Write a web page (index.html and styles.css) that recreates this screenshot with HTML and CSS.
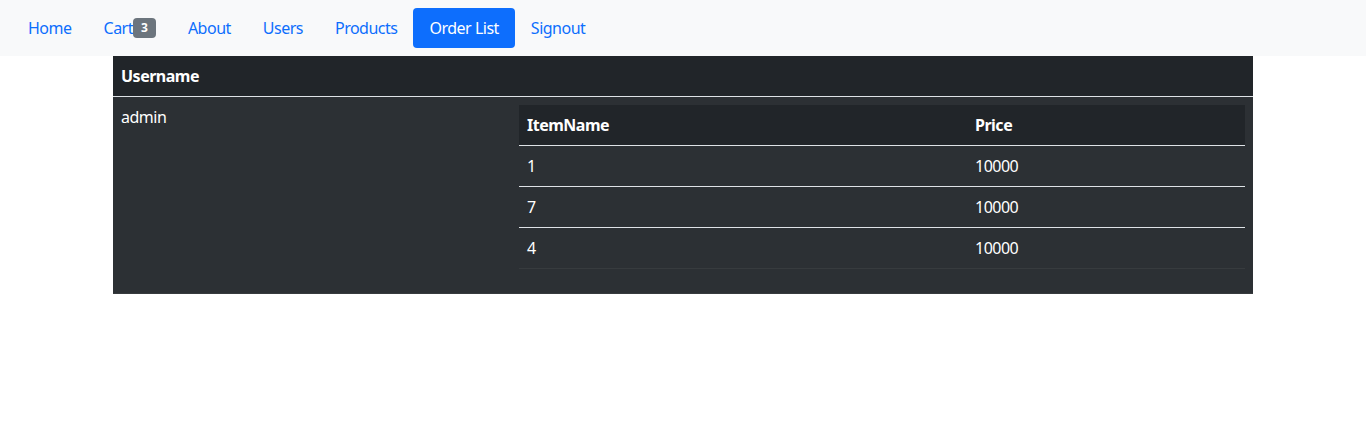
FILE: index.html
```html
<!DOCTYPE html>
<html>
<head>
<meta charset="utf-8">
<link rel="stylesheet" href="styles.css">
</head>
<body>
<nav class="navbar">
  <a class="nav-link" href="#">Home</a>
  <a class="nav-link" href="#">Cart<span class="badge">3</span></a>
  <a class="nav-link" href="#">About</a>
  <a class="nav-link" href="#">Users</a>
  <a class="nav-link" href="#">Products</a>
  <a class="nav-link active" href="#">Order List</a>
  <a class="nav-link" href="#">Signout</a>
</nav>
<div class="container">
  <table class="table outer">
    <thead>
      <tr><th colspan="2">Username</th></tr>
    </thead>
    <tbody>
      <tr class="striped">
        <td class="user-col">admin</td>
        <td>
          <table class="table inner">
            <thead>
              <tr><th class="item-col">ItemName</th><th>Price</th></tr>
            </thead>
            <tbody>
              <tr><td>1</td><td>10000</td></tr>
              <tr><td>7</td><td>10000</td></tr>
              <tr class="last"><td>4</td><td>10000</td></tr>
            </tbody>
          </table>
        </td>
      </tr>
    </tbody>
  </table>
</div>
</body>
</html>
```
FILE: styles.css
```css
* { box-sizing: border-box; }
body {
  margin: 0;
  font-family: "Noto Sans", "Open Sans", sans-serif;
  font-size: 16px;
  line-height: 24px;
  letter-spacing: -0.5px;
  color: #212529;
  background: #fff;
}
.navbar {
  display: flex;
  align-items: center;
  height: 56px;
  padding: 8px 12px;
  background: #f8f9fa;
}
.nav-link {
  display: flex;
  align-items: center;
  padding: 8px 16px;
  color: #0d6efd;
  text-decoration: none;
  border-radius: 4px;
  line-height: 24px;
}
.nav-link.active {
  background: #0d6efd;
  color: #fff;
}
.badge {
  display: inline-block;
  background: #6c757d;
  color: #fff;
  font-size: 12px;
  font-weight: 700;
  line-height: 1;
  letter-spacing: 0;
  padding: 4px 8px;
  border-radius: 4px;
}
.container {
  width: 1140px;
  margin: 0 auto;
}
.table {
  width: 100%;
  border-collapse: collapse;
  color: #fff;
}
.table th {
  text-align: left;
  font-weight: 700;
  background: #212529;
  padding: 8px;
  border-bottom: 1px solid #dee2e6;
}
.table td {
  padding: 8px;
  vertical-align: top;
}
.outer tbody > tr.striped > td {
  background: #2c3034;
  border-bottom: 1px solid #373b3e;
}
.user-col { width: 398px; }
.inner {
  margin-bottom: 16px;
}
.inner td {
  background: #2c3034;
  border-bottom: 1px solid #dee2e6;
}
.inner tr.last td {
  border-bottom-color: #373b3e;
}
.item-col { width: 448px; }
```
